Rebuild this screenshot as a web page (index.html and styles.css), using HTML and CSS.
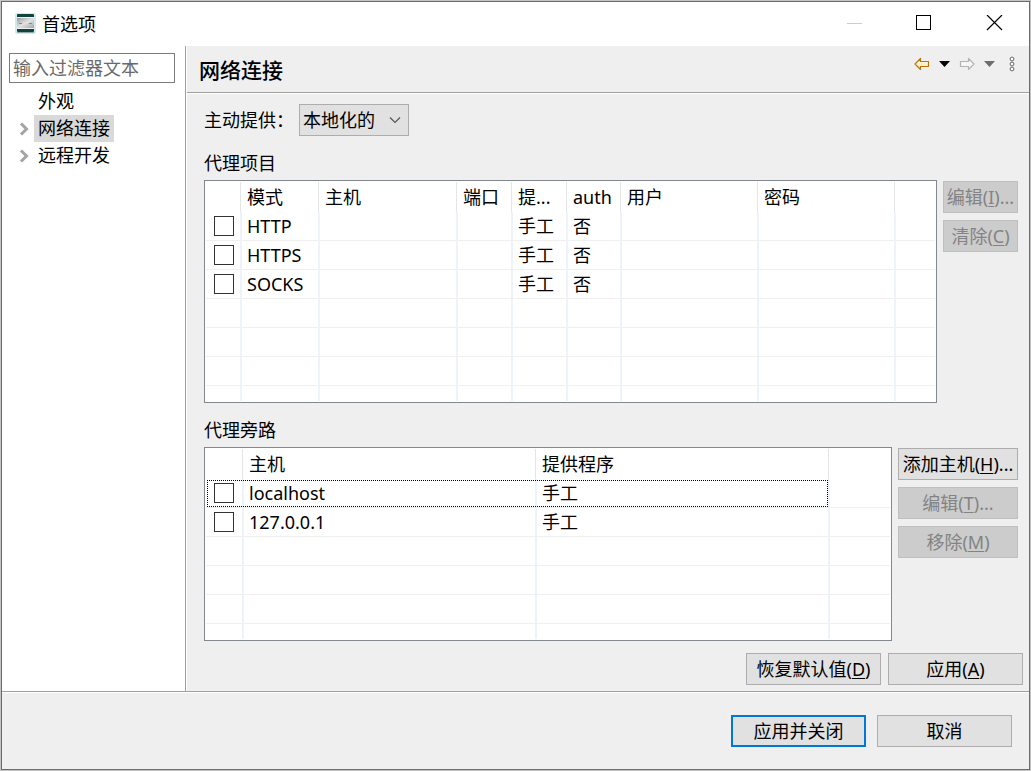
FILE: index.html
```html
<!DOCTYPE html>
<html lang="zh-CN">
<head>
<meta charset="utf-8">
<title>首选项</title>
<link rel="stylesheet" href="styles.css">
</head>
<body>
<div class="window">
  <header class="titlebar">
    <svg class="app-icon" width="21" height="21" viewBox="0 0 21 21" aria-hidden="true">
      <defs><linearGradient id="metal" x1="0" y1="0" x2="1" y2="1"><stop offset="0" stop-color="#9c9c9c"/><stop offset=".5" stop-color="#e2e2e2"/><stop offset="1" stop-color="#a4a4a4"/></linearGradient></defs>
      <rect width="21" height="21" rx="2" fill="#d4e9ef"/>
      <rect x="2" y="1" width="17" height="18" rx="1" fill="#10453f"/>
      <path d="M2 5h17v10H2z" fill="url(#metal)"/>
      <path d="M2 4.500h17M2 15.500h17" stroke="#f1f1f1"/>
      <path d="M4 10.500h3M14 10.500h3" stroke="#888"/>
      <path d="M2 19.500h17" stroke="#8fa9ab"/>
    </svg>
    <h1 class="window-title">首选项</h1>
    <div class="window-controls">
      <button class="control" aria-label="最小化" disabled><svg width="17" height="17"><path d="M1 8.500h15" stroke="#ccc"/></svg></button>
      <button class="control" aria-label="最大化"><svg width="17" height="17"><rect x=".5" y=".5" width="14" height="14" fill="none" stroke="#000"/></svg></button>
      <button class="control" aria-label="关闭"><svg width="17" height="17"><path d="M1 0l15 15M16 0L1 15" stroke="#000" stroke-width="1.200"/></svg></button>
    </div>
  </header>

  <div class="main">
    <nav class="sidebar">
      <input class="filter" type="text" placeholder="输入过滤器文本" aria-label="输入过滤器文本">
      <ul class="tree">
        <li class="tree-row"><span class="expander"></span><span class="tree-label">外观</span></li>
        <li class="tree-row"><svg class="expander" width="12" height="14"><path d="M2 1.500l5.500 5.500L2 12.500" fill="none" stroke="#a3a3a3" stroke-width="3"/></svg><span class="tree-label selected">网络连接</span></li>
        <li class="tree-row"><svg class="expander" width="12" height="14"><path d="M2 1.500l5.500 5.500L2 12.500" fill="none" stroke="#a3a3a3" stroke-width="3"/></svg><span class="tree-label">远程开发</span></li>
      </ul>
    </nav>

    <section class="page">
      <div class="page-header">
        <h2 class="page-title">网络连接</h2>
        <div class="toolbar">
          <button class="tool" aria-label="后退"><svg width="16" height="14"><defs><linearGradient id="gold" x1="0" y1="0" x2="0" y2="1"><stop offset="0" stop-color="#fffef4"/><stop offset="1" stop-color="#fbe3a0"/></linearGradient></defs><path d="M1 7L6.500 1.500V4.500h8v5h-8v3z" fill="url(#gold)" stroke="#b5750f" stroke-width="1.200" stroke-linejoin="round"/></svg></button>
          <button class="tool" aria-label="后退历史"><svg width="11" height="14"><path d="M0 4h11L5.500 10z" fill="#000"/></svg></button>
          <button class="tool" aria-label="前进" disabled><svg width="16" height="14"><path d="M15 7L9.500 1.500V4.500h-8v5h8v3z" fill="#f6f6f6" stroke="#b4b4b4" stroke-width="1.200" stroke-linejoin="round"/></svg></button>
          <button class="tool" aria-label="前进历史" disabled><svg width="11" height="14"><path d="M0 4h11L5.500 10z" fill="#6d6d6d"/></svg></button>
          <button class="tool menu" aria-label="视图菜单"><svg width="6" height="16"><g fill="#fff" stroke="#666"><circle cx="3" cy="3" r="1.900"/><circle cx="3" cy="8" r="1.900"/><circle cx="3" cy="13" r="1.900"/></g></svg></button>
        </div>
      </div>

      <div class="content">
        <div class="provider">
          <label for="provider">主动提供：</label>
          <div class="select-box">
            <select id="provider"><option>本地化的</option></select>
            <svg class="arrow" width="12" height="8"><path d="M1 1.500l5 5 5-5" fill="none" stroke="#555" stroke-width="1.200"/></svg>
          </div>
        </div>

        <h3 class="caption">代理项目</h3>
        <div class="group">
          <div class="grid-frame">
            <table class="grid">
              <colgroup><col class="w36"><col class="w78"><col class="w138"><col class="w55"><col class="w55"><col class="w54"><col class="w137"><col class="w137"><col></colgroup>
              <thead><tr><th></th><th>模式</th><th>主机</th><th>端口</th><th>提...</th><th>auth</th><th>用户</th><th>密码</th><th></th></tr></thead>
              <tbody>
                <tr><td><input type="checkbox" aria-label="HTTP"></td><td>HTTP</td><td></td><td></td><td>手工</td><td>否</td><td></td><td></td><td></td></tr>
                <tr><td><input type="checkbox" aria-label="HTTPS"></td><td>HTTPS</td><td></td><td></td><td>手工</td><td>否</td><td></td><td></td><td></td></tr>
                <tr><td><input type="checkbox" aria-label="SOCKS"></td><td>SOCKS</td><td></td><td></td><td>手工</td><td>否</td><td></td><td></td><td></td></tr>
                <tr><td></td><td></td><td></td><td></td><td></td><td></td><td></td><td></td><td></td></tr>
                <tr><td></td><td></td><td></td><td></td><td></td><td></td><td></td><td></td><td></td></tr>
                <tr><td></td><td></td><td></td><td></td><td></td><td></td><td></td><td></td><td></td></tr>
                <tr class="partial"><td></td><td></td><td></td><td></td><td></td><td></td><td></td><td></td><td></td></tr>
              </tbody>
            </table>
          </div>
          <div class="side-buttons narrow">
            <button class="button" disabled>编辑(<u>I</u>)...</button>
            <button class="button" disabled>清除(<u>C</u>)</button>
          </div>
        </div>

        <h3 class="caption">代理旁路</h3>
        <div class="group">
          <div class="grid-frame">
            <table class="grid">
              <colgroup><col class="w38"><col class="w293"><col class="w293"><col></colgroup>
              <thead><tr><th></th><th>主机</th><th>提供程序</th><th></th></tr></thead>
              <tbody>
                <tr class="focused"><td><input type="checkbox" aria-label="localhost"></td><td>localhost</td><td>手工</td><td></td></tr>
                <tr><td><input type="checkbox" aria-label="127.0.0.1"></td><td>127.0.0.1</td><td>手工</td><td></td></tr>
                <tr><td></td><td></td><td></td><td></td></tr>
                <tr><td></td><td></td><td></td><td></td></tr>
                <tr><td></td><td></td><td></td><td></td></tr>
                <tr class="partial"><td></td><td></td><td></td><td></td></tr>
              </tbody>
            </table>
          </div>
          <div class="side-buttons wide">
            <button class="button">添加主机(<u>H</u>)...</button>
            <button class="button" disabled>编辑(<u>T</u>)...</button>
            <button class="button" disabled>移除(<u>M</u>)</button>
          </div>
        </div>
      </div>

      <div class="page-buttons">
        <button class="button">恢复默认值(<u>D</u>)</button>
        <button class="button">应用(<u>A</u>)</button>
      </div>
    </section>
  </div>

  <footer class="footer">
    <button class="button default">应用并关闭</button>
    <button class="button">取消</button>
  </footer>
</div>
</body>
</html>
```
FILE: styles.css
```css
*,
*::after {
  box-sizing: border-box;
}

body {
  margin: 0;
  padding: 1px;
  background: #c4c4c4;
  color: #000;
  font: 18px/26px "Noto Sans", "Noto Sans CJK SC", sans-serif;
}

h1, h2, h3, ul {
  margin: 0;
  padding: 0;
  font-size: 18px;
  font-weight: 400;
}

button, input, select {
  font: inherit;
  color: inherit;
  border-radius: 0;
  margin: 0;
}

svg {
  display: block;
}

.window {
  display: flex;
  flex-direction: column;
  min-height: calc(100vh - 2px);
  border: 1px solid #6b6b6b;
  background: #efefef;
}

/* Title bar */
.titlebar {
  display: flex;
  align-items: center;
  gap: 6px;
  height: 44px;
  padding: 0 0 1px 13px;
  background: #fff;
}

.window-title {
  flex: 1;
}

.window-controls {
  display: flex;
}

.control {
  display: flex;
  align-items: center;
  justify-content: center;
  width: 70px;
  height: 42px;
  padding: 0;
  border: 0;
  background: none;
}

/* Sidebar */
.main {
  display: flex;
  flex: 1;
  border-bottom: 1px solid #a0a0a0;
}

.sidebar {
  flex: 0 0 184px;
  padding: 7px 10px 7px 7px;
  border-right: 1px solid #a0a0a0;
  background: #fff;
}

.filter {
  display: block;
  width: 100%;
  height: 30px;
  padding: 0 3px;
  border: 1px solid #7a7a7a;
  background: #fff;
}

.filter::placeholder {
  color: #6a6a6a;
}

.tree {
  margin-top: 5px;
  list-style: none;
}

.tree-row {
  display: flex;
  align-items: center;
  gap: 3px;
  height: 27px;
  padding-left: 10px;
}

.expander {
  width: 12px;
}

.tree-label {
  padding: 0 4px;
  line-height: 27px;
}

.selected {
  background: #d9d9d9;
}

/* Page */
.page {
  display: flex;
  flex: 1;
  flex-direction: column;
  min-width: 0;
  border-left: 1px solid #fff;
}

.page-header {
  display: flex;
  justify-content: space-between;
  height: 47px;
  padding: 0 14px 0 12px;
  border-bottom: 1px solid #a0a0a0;
}

.page-title {
  font-size: 21px;
  font-weight: 500;
  line-height: 48px;
}

.toolbar {
  display: flex;
  align-items: center;
  gap: 9px;
  height: 36px;
}

.tool {
  padding: 0;
  border: 0;
  background: none;
}

.menu {
  margin-left: 5px;
}

.content {
  flex: 1;
  padding: 10px 11px 11px 17px;
  border-top: 1px solid #fff;
}

.provider {
  display: flex;
  align-items: center;
  gap: 5px;
}

.select-box {
  position: relative;
  width: 110px;
}

.select-box select {
  display: block;
  width: 100%;
  height: 32px;
  padding: 0 3px;
  border: 1px solid #adadad;
  background: #e1e1e1;
  appearance: none;
}

.arrow {
  position: absolute;
  top: 12px;
  right: 8px;
  pointer-events: none;
}

.caption {
  margin: 14px 0 4px;
}

.group {
  display: flex;
  gap: 6px;
}

.grid-frame {
  flex: 1;
  min-width: 0;
  padding: 0 1px 1px;
  border: 1px solid #828790;
  background: #fff;
}

.grid {
  width: 100%;
  table-layout: fixed;
  border-spacing: 0;
}

.grid th,
.grid td {
  height: 29px;
  padding: 0 0 0 5px;
  overflow: hidden;
  font-weight: 400;
  text-align: left;
  white-space: nowrap;
}

.grid th {
  height: 31px;
  background: linear-gradient(#e5e5e5, #e5e5e5) right 1px top 1px / 1px 100% no-repeat;
}

.grid td {
  border-right: 2px solid #edf2fb;
  border-bottom: 1px solid #f0f0f0;
}

.grid th:last-child {
  background: none;
}

.grid td:last-child {
  border-right: 0;
}

.grid .partial td {
  height: 15px;
  border-bottom: 0;
}

.grid tbody td:first-child {
  padding-left: 8px;
}

.grid input {
  display: block;
  width: 20px;
  height: 20px;
  border: 1px solid #333;
  background: #fff;
  appearance: none;
}

.w36 { width: 36px; }
.w38 { width: 38px; }
.w54 { width: 54px; }
.w55 { width: 55px; }
.w78 { width: 78px; }
.w137 { width: 137px; }
.w138 { width: 138px; }
.w293 { width: 293px; }

.focused {
  position: relative;
}

.focused td:first-child::after {
  content: "";
  position: absolute;
  top: 1px;
  left: 1px;
  width: 621px;
  height: 27px;
  border: 1px dotted #000;
  pointer-events: none;
}

/* Buttons */
.side-buttons {
  display: flex;
  flex-direction: column;
  gap: 7px;
  padding-top: 1px;
}

.narrow {
  width: 75px;
}

.wide {
  width: 120px;
}

.button {
  height: 32px;
  padding: 0;
  border: 1px solid #adadad;
  background: #e1e1e1;
  white-space: nowrap;
}

.button:disabled {
  border-color: #bfbfbf;
  background: #ccc;
  color: #838383;
}

.button u {
  text-decoration-thickness: 1px;
  text-underline-offset: 2px;
}

.page-buttons {
  display: flex;
  justify-content: flex-end;
  gap: 7px;
  padding: 0 6px 6px;
}

.page-buttons .button,
.footer .button {
  width: 135px;
}

.footer {
  display: flex;
  justify-content: flex-end;
  gap: 11px;
  padding: 22px 17px;
  border-top: 1px solid #fff;
}

.button.default {
  border: 2px solid #0078d7;
}
```
